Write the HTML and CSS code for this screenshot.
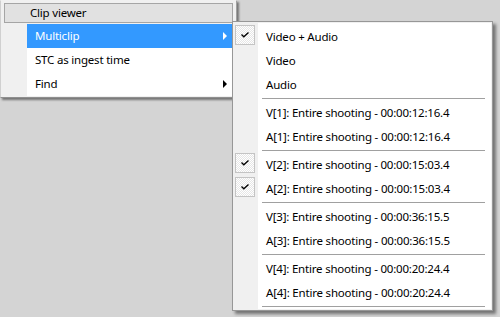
FILE: index.html
```html
<!DOCTYPE html>
<html>
<head>
	<title>Clip viewer menu</title>
	<link rel="stylesheet" href="styles.css">
</head>
<body>
	<div class="menu mainMenu">
		<div class="menuTitle">Clip viewer</div>
		<ul class="items">
			<li class="item active sub">Multiclip</li>
			<li class="item">STC as ingest time</li>
			<li class="item sub">Find</li>
		</ul>
	</div>

	<div class="menu subMenu">
		<div class="list">
			<div class="row checked"><span class="box"><svg width="8" height="6" viewBox="0 0 8 6"><polyline points="0.5,2.5 2.8,4.8 7.5,0.5" fill="none" stroke="#000" stroke-width="1.3"/></svg></span><span class="label">Video + Audio</span></div>
			<div class="row"><span class="box"></span><span class="label">Video</span></div>
			<div class="row"><span class="box"></span><span class="label">Audio</span></div>
			<div class="sep"></div>
			<div class="row"><span class="box"></span><span class="label">V[1]: Entire shooting - 00:00:12:16.4</span></div>
			<div class="row"><span class="box"></span><span class="label">A[1]: Entire shooting - 00:00:12:16.4</span></div>
			<div class="sep"></div>
			<div class="row checked"><span class="box"><svg width="8" height="6" viewBox="0 0 8 6"><polyline points="0.5,2.5 2.8,4.8 7.5,0.5" fill="none" stroke="#000" stroke-width="1.3"/></svg></span><span class="label">V[2]: Entire shooting - 00:00:15:03.4</span></div>
			<div class="row checked"><span class="box"><svg width="8" height="6" viewBox="0 0 8 6"><polyline points="0.5,2.5 2.8,4.8 7.5,0.5" fill="none" stroke="#000" stroke-width="1.3"/></svg></span><span class="label">A[2]: Entire shooting - 00:00:15:03.4</span></div>
			<div class="sep"></div>
			<div class="row"><span class="box"></span><span class="label">V[3]: Entire shooting - 00:00:36:15.5</span></div>
			<div class="row"><span class="box"></span><span class="label">A[3]: Entire shooting - 00:00:36:15.5</span></div>
			<div class="sep"></div>
			<div class="row"><span class="box"></span><span class="label">V[4]: Entire shooting - 00:00:20:24.4</span></div>
			<div class="row"><span class="box"></span><span class="label">A[4]: Entire shooting - 00:00:20:24.4</span></div>
			<div class="sep"></div>
		</div>
	</div>
</body>
</html>
```

FILE: styles.css
```css
body{
	margin: 0;
	width: 500px;
	height: 317px;
	background-color: #d4d4d4;
	font-family: "Noto Sans", "Open Sans", sans-serif;
	font-size: 11.5px;
	letter-spacing: -0.2px;
	color: #000;
	position: relative;
	overflow: hidden;
}

.menu{
	position: absolute;
	box-sizing: border-box;
	background-color: #f0f0f0;
	border: 1px solid #979797;
	box-shadow: 2px 2px 2px rgba(0, 0, 0, 0.45);
}

.mainMenu{
	left: 0;
	top: 0;
	width: 237px;
	height: 98px;
	padding: 2px 3px 0 2px;
	border-color: #f0f0f0 #a0a0a0 #8f8f8f #d0d0d0;
}

.menuTitle{
	height: 18px;
	line-height: 18px;
	margin-left: 1px;
	padding-left: 25px;
	background-color: #e1e1e1;
	border: 1px solid #a5a5a5;
}

.items{
	list-style: none;
	margin: 1px 0 0 24px;
	padding: 0;
	background-color: #fff;
}

.item{
	position: relative;
	height: 24px;
	line-height: 24px;
	padding-left: 8px;
}

.item.active{
	background-color: #3399ff;
	color: #fff;
}

.item.sub::after{
	content: "";
	position: absolute;
	right: 6px;
	top: 8px;
	border-left: 4px solid #000;
	border-top: 4px solid transparent;
	border-bottom: 4px solid transparent;
}

.item.active::after{
	border-left-color: #fff;
}

.subMenu{
	left: 232px;
	top: 21px;
	width: 261px;
	height: 290px;
	padding: 1px 1px 1px 0;
	box-shadow: 3px 3px 3px rgba(0, 0, 0, 0.45);
}

.list{
	height: 100%;
	padding-top: 2px;
	box-sizing: border-box;
	background: linear-gradient(to right, #f0f0f0 25px, #fff 25px);
}

.row{
	display: flex;
	align-items: flex-start;
	height: 24px;
}

.box{
	width: 20px;
	height: 20px;
	margin: 0 4px 0 2px;
	box-sizing: border-box;
	flex: none;
}

.row.checked .box{
	display: flex;
	align-items: center;
	justify-content: center;
	border: 1px solid #c4c4c4;
	background: repeating-conic-gradient(#e6e6e6 0 25%, #fff 0 50%) 0 0 / 2px 2px;
}

.label{
	padding-left: 7px;
	line-height: 24px;
}

.sep{
	height: 4px;
	margin: 0 6px 0 29px;
	box-sizing: border-box;
	padding-top: 1px;
}

.sep::before{
	content: "";
	display: block;
	border-top: 1px solid #a0a0a0;
}
```
